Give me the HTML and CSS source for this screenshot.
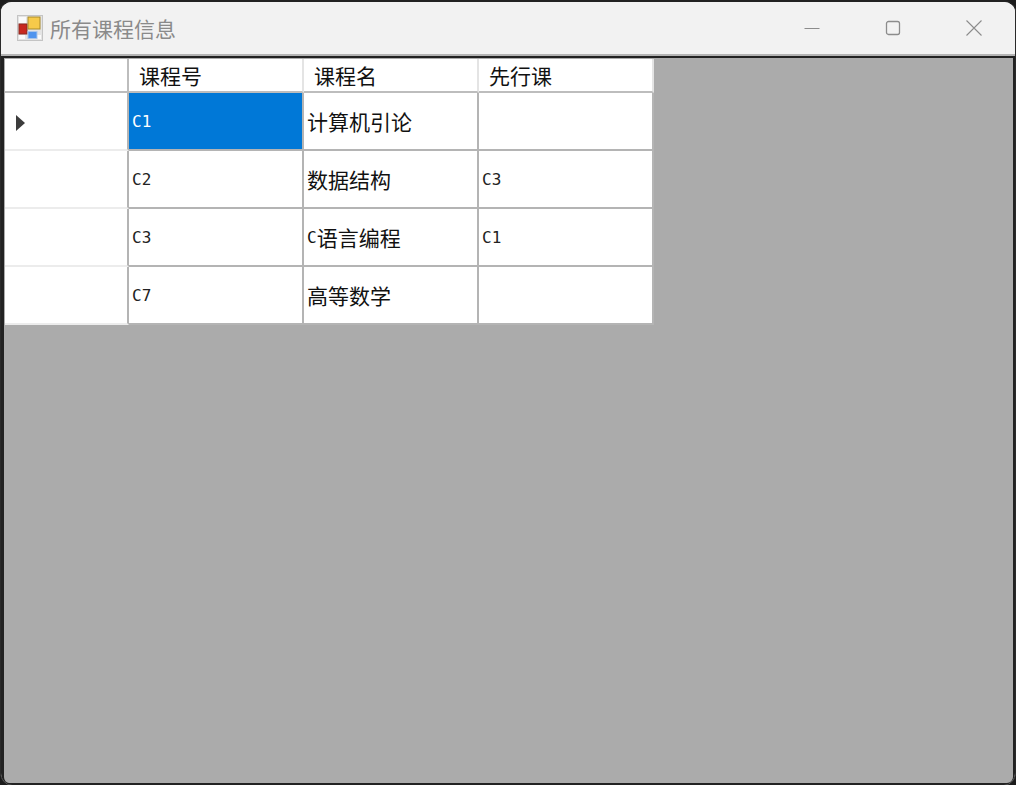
FILE: index.html
```html
<!DOCTYPE html>
<html lang="zh-CN">
<head>
<meta charset="utf-8">
<title>所有课程信息</title>
<link rel="stylesheet" href="styles.css">
</head>
<body>
<div class="window">
  <header class="titlebar">
    <svg class="app-icon" width="26" height="26" viewBox="0 0 26 26">
      <rect x="0.5" y="0.5" width="25" height="25" fill="#e4e4e4" stroke="#c4c4c4"/>
      <rect x="2" y="2" width="7" height="6" fill="#fafafa"/>
      <rect x="2" y="20" width="6" height="4" fill="#fafafa"/>
      <rect x="20" y="20" width="4" height="4" fill="#fafafa"/>
      <rect x="2" y="9" width="8" height="10" fill="#c8281f" stroke="#8a2a22"/>
      <rect x="11" y="2" width="12" height="12" fill="#f6ca4a" stroke="#a88a2a"/>
      <rect x="11" y="16.500" width="9" height="7" fill="#4f94ee" stroke="#a9c5ea"/>
    </svg>
    <h1 class="title">所有课程信息</h1>
    <div class="controls">
      <svg class="control" width="16" height="16" viewBox="0 0 16 16"><path d="M0.5 8.500H15.500" stroke="#8c8c8c" fill="none"/></svg>
      <svg class="control" width="16" height="16" viewBox="0 0 16 16"><rect x="1.500" y="1.500" width="13" height="13" rx="2" stroke="#8c8c8c" fill="none" stroke-width="1.300"/></svg>
      <svg class="control" width="16" height="16" viewBox="0 0 16 16"><path d="M0.500 0.500L15.500 15.500M15.500 0.500L0.500 15.500" stroke="#8c8c8c" fill="none" stroke-width="1.100"/></svg>
    </div>
  </header>
  <main class="client">
    <div class="grid">
      <div class="corner"></div>
      <div class="head">课程号</div>
      <div class="head">课程名</div>
      <div class="head">先行课</div>

      <div class="rowhead"><span class="arrow"></span></div>
      <div class="cell code selected">C1</div>
      <div class="cell">计算机引论</div>
      <div class="cell code"></div>

      <div class="rowhead"></div>
      <div class="cell code">C2</div>
      <div class="cell">数据结构</div>
      <div class="cell code">C3</div>

      <div class="rowhead"></div>
      <div class="cell code">C3</div>
      <div class="cell"><span class="tight">C</span>语言编程</div>
      <div class="cell code">C1</div>

      <div class="rowhead"></div>
      <div class="cell code">C7</div>
      <div class="cell">高等数学</div>
      <div class="cell code"></div>
    </div>
  </main>
</div>
</body>
</html>
```

FILE: styles.css
```css
* { box-sizing: border-box; }
html, body { margin: 0; height: 100%; background: #1c1c1c; overflow: hidden; }
body { font-family: "Noto Sans CJK SC", "Liberation Sans", sans-serif; }

.window {
  width: 1016px;
  height: 785px;
  display: flex;
  flex-direction: column;
  background: #f2f2f2;
  border-radius: 12px;
  border-top: 2px solid #222;
  border-left: 1px solid #2a2a2a;
  border-right: 1px solid #2a2a2a;
  overflow: hidden;
}

.titlebar {
  height: 54px;
  flex: none;
  display: flex;
  align-items: center;
  padding: 0 33px 0 16px;
  background: #f2f2f2;
  border-bottom: 2px solid #b4b4b4;
}
.app-icon { flex: none; margin-top: -1px; }
.title {
  margin: 0 0 0 7px;
  font-size: 21px;
  line-height: 26px;
  font-weight: 400;
  color: #8a8a8a;
  white-space: nowrap;
}
.controls { margin-left: auto; display: flex; gap: 65px; align-items: center; }
.control { display: block; }

.client {
  flex: 1;
  background: #ababab;
  border: 2px solid #222;
  border-width: 2px 2px 2px 3px;
  border-radius: 0 0 8px 8px;
  padding-top: 1px;
  padding-left: 1px;
}

.grid {
  display: grid;
  grid-template-columns: 124px 175px 175px 175px;
  grid-template-rows: 34px 58px 58px 58px 58px;
  width: 649px;
  background: #fff;
  font-size: 21px;
  color: #111;
}
.corner {
  background: #fff;
  border-right: 2px solid #bdbdbd;
  border-bottom: 2px solid #bdbdbd;
}
.head {
  background: #fff;
  padding-left: 10px;
  line-height: 32px;
  border-right: 2px solid #e4e4e4;
  border-bottom: 2px solid #bdbdbd;
}
.head:nth-child(4) { border-right: 2px solid #e4e4e4; }
.rowhead {
  display: flex;
  align-items: center;
  padding-left: 11px;
  background: #fff;
  border-right: 2px solid #b4b4b4;
  border-bottom: 2px solid #ececec;
}
.arrow {
  width: 0;
  height: 0;
  border-left: 9px solid #3c3c3c;
  border-top: 8px solid transparent;
  border-bottom: 8px solid transparent;
  margin-top: 3px;
}
.cell {
  display: flex;
  align-items: center;
  padding-left: 3px;
  background: #fff;
  border-right: 2px solid #b4b4b4;
  border-bottom: 2px solid #b4b4b4;
  white-space: pre;
}
.code {
  font-family: "DejaVu Sans Mono", "Liberation Mono", monospace;
  font-size: 16px;
  color: #222;
}
.tight {
  font-family: "DejaVu Sans Mono", monospace;
  font-size: 16px;
}
.selected { background: #0078d7; color: #fff; }
```
